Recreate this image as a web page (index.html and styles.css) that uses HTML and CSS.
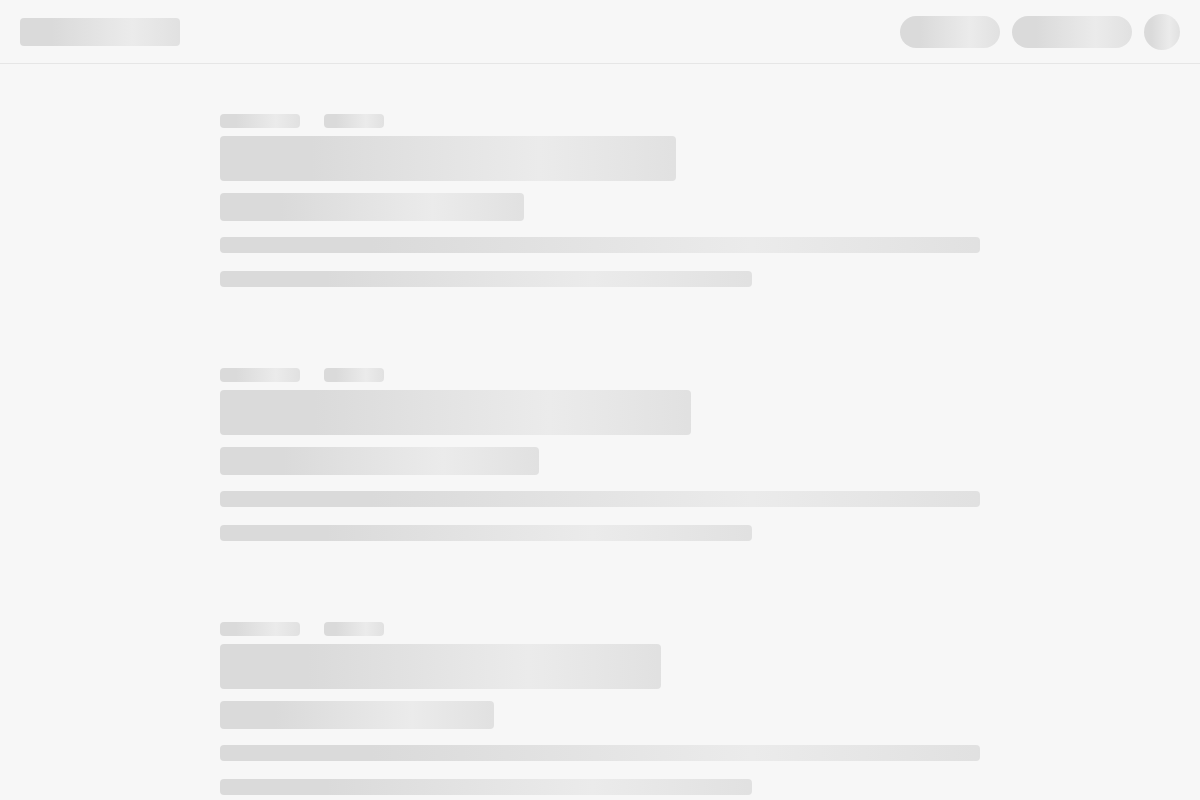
FILE: index.html
```html
<!DOCTYPE html>
<html lang="en">
<head>
<meta charset="utf-8">
<title>Loading</title>
<link rel="stylesheet" href="styles.css">
</head>
<body>
<header class="topbar">
  <div class="sk logo"></div>
  <div class="actions">
    <div class="sk pill pill-sm"></div>
    <div class="sk pill pill-lg"></div>
    <div class="sk avatar"></div>
  </div>
</header>
<main class="feed">
  <article class="post">
    <div class="meta"><div class="sk tag tag-a"></div><div class="sk tag tag-b"></div></div>
    <div class="sk title title-1"></div>
    <div class="sk subtitle sub-1"></div>
    <div class="sk line"></div>
    <div class="sk line line-short"></div>
  </article>
  <article class="post">
    <div class="meta"><div class="sk tag tag-a"></div><div class="sk tag tag-b"></div></div>
    <div class="sk title title-2"></div>
    <div class="sk subtitle sub-2"></div>
    <div class="sk line"></div>
    <div class="sk line line-short"></div>
  </article>
  <article class="post">
    <div class="meta"><div class="sk tag tag-a"></div><div class="sk tag tag-b"></div></div>
    <div class="sk title title-3"></div>
    <div class="sk subtitle sub-3"></div>
    <div class="sk line"></div>
    <div class="sk line line-short"></div>
  </article>
</main>
</body>
</html>
```
FILE: styles.css
```css
* { box-sizing: border-box; }
html, body { margin: 0; padding: 0; }
body {
  background: #f7f7f7;
  font-family: "Liberation Sans", Arial, sans-serif;
  height: 800px;
  overflow: hidden;
}
.sk {
  background: linear-gradient(90deg, #dadada 25%, #ebebeb 50%, #dadada 75%);
  background-size: 200% 100%;
  background-position: 30% 0;
  border-radius: 4px;
}
.topbar {
  height: 64px;
  border-bottom: 1px solid #e6e6e6;
  display: flex;
  align-items: center;
  justify-content: space-between;
  padding: 0 20px;
}
.logo { width: 160px; height: 28px; }
.actions { display: flex; align-items: center; gap: 12px; }
.pill { height: 32px; border-radius: 16px; }
.pill-sm { width: 100px; }
.pill-lg { width: 120px; }
.avatar { width: 36px; height: 36px; border-radius: 50%; }
.feed {
  width: 760px;
  margin: 0 auto;
  padding-top: 50px;
  display: flex;
  flex-direction: column;
  gap: 81px;
}
.post { display: flex; flex-direction: column; align-items: flex-start; }
.meta { display: flex; gap: 24px; margin-bottom: 8px; }
.tag { height: 14px; }
.tag-a { width: 80px; }
.tag-b { width: 60px; }
.title { height: 45px; margin-bottom: 12px; }
.title-1 { width: 456px; }
.title-2 { width: 471px; }
.title-3 { width: 441px; }
.subtitle { height: 28px; margin-bottom: 16px; }
.sub-1 { width: 304px; }
.sub-2 { width: 319px; }
.sub-3 { width: 274px; }
.line { width: 760px; height: 16px; }
.line + .line { margin-top: 18px; }
.line-short { width: 532px; }
```
